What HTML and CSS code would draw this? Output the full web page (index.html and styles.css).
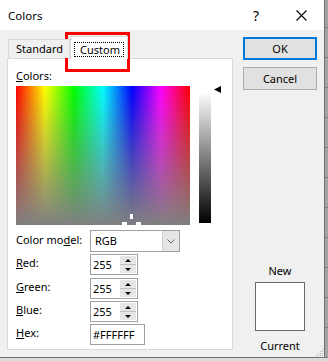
FILE: index.html
```html
<!DOCTYPE html>
<html lang="en">
<head>
<meta charset="UTF-8">
<title>Colors</title>
<link rel="stylesheet" href="styles.css">
</head>
<body>
<div class="screen">
  <div class="window">
    <div class="titlebar">
      <span class="title">Colors</span>
      <span class="help">?</span>
      <span class="close">
        <svg width="11" height="11" viewBox="0 0 11 11"><path d="M0.5 0.5L10.5 10.5M10.5 0.5L0.5 10.5" stroke="#000" stroke-width="1.1" fill="none"/></svg>
      </span>
    </div>
    <div class="main">
      <div class="tabs">
        <div class="tab-row">
          <div class="tab">Standard</div>
          <div class="tab active"><span class="focus">Custom</span></div>
        </div>
        <div class="panel">
          <div class="lbl"><u>C</u>olors:</div>
          <div class="picker">
            <div class="spectrum">
              <span class="cross v"></span>
              <span class="cross l"></span>
              <span class="cross r"></span>
            </div>
            <div class="lum"></div>
            <svg class="arrow" width="7" height="7" viewBox="0 0 7 7"><path d="M0 3.5L7 0V7Z" fill="#000"/></svg>
          </div>
          <div class="row first">
            <label>Color mo<u>d</u>el:</label>
            <div class="combo">
              <span>RGB</span>
              <div class="drop">
                <svg width="8" height="5" viewBox="0 0 8 5"><path d="M0.5 0.5L4 4L7.5 0.5" stroke="#606060" fill="none"/></svg>
              </div>
            </div>
          </div>
          <div class="row">
            <label><u>R</u>ed:</label>
            <div class="spin-box"><span class="val">255</span><div class="spin"><i><b class="up"></b></i><i><b class="down"></b></i></div></div>
          </div>
          <div class="row gap3">
            <label><u>G</u>reen:</label>
            <div class="spin-box"><span class="val">255</span><div class="spin"><i><b class="up"></b></i><i><b class="down"></b></i></div></div>
          </div>
          <div class="row">
            <label><u>B</u>lue:</label>
            <div class="spin-box"><span class="val">255</span><div class="spin"><i><b class="up"></b></i><i><b class="down"></b></i></div></div>
          </div>
          <div class="row">
            <label><u>H</u>ex:</label>
            <div class="hex">#FFFFFF</div>
          </div>
        </div>
      </div>
      <div class="side">
        <button class="btn ok">OK</button>
        <button class="btn cancel">Cancel</button>
        <div class="new">New</div>
        <div class="swatch"></div>
        <div class="current">Current</div>
      </div>
    </div>
    <svg class="grip" width="10" height="10" viewBox="0 0 10 10">
      <rect x="8" y="2" width="1" height="1" fill="#b0b0b0"/>
      <rect x="6" y="4" width="1" height="1" fill="#b0b0b0"/>
      <rect x="8" y="4" width="1" height="1" fill="#b0b0b0"/>
      <rect x="4" y="6" width="1" height="1" fill="#b0b0b0"/>
      <rect x="6" y="6" width="1" height="1" fill="#b0b0b0"/>
      <rect x="8" y="6" width="1" height="1" fill="#b0b0b0"/>
      <rect x="2" y="8" width="1" height="1" fill="#b0b0b0"/>
      <rect x="4" y="8" width="1" height="1" fill="#b0b0b0"/>
      <rect x="6" y="8" width="1" height="1" fill="#b0b0b0"/>
      <rect x="8" y="8" width="1" height="1" fill="#b0b0b0"/>
    </svg>
  </div>
  <div class="strip"></div>
  <div class="mark"></div>
</div>
</body>
</html>
```

FILE: styles.css
```css
* {
margin: 0;
padding: 0;
box-sizing: border-box;
}
body {
background: #dadada;
font-family: "Noto Sans", sans-serif;
font-size: 11px;
color: #000;
}
.screen {
display: flex;
position: relative;
}
.window {
position: relative;
width: 325px;
height: 358px;
background: #f0f0f0;
border-right: 1px solid #707070;
border-bottom: 1px solid #707070;
}
.strip {
width: 3px;
height: 358px;
background: repeating-linear-gradient(to bottom, #a3a3a3 0 27px, #7d7d7d 27px 28px, #a3a3a3 28px 30px);
}
.mark {
position: absolute;
left: 65px;
top: 32px;
width: 65px;
height: 40px;
border: 3px solid #f00;
}
.titlebar {
height: 30px;
background: #fff;
display: flex;
align-items: center;
padding: 0 13px 0 8px;
}
.title {
flex: 1;
font-size: 11.5px;
}
.help {
width: 14px;
margin-right: 28px;
text-align: center;
font-size: 14px;
}
.close {
width: 20px;
display: flex;
justify-content: center;
}
.main {
display: flex;
height: 327px;
padding: 6px 0 0 7px;
}
.tabs {
width: 226px;
display: flex;
flex-direction: column;
}
.tab-row {
position: relative;
z-index: 1;
display: flex;
align-items: flex-end;
height: 23px;
margin-bottom: -1px;
}
.tab {
width: 62px;
height: 19px;
margin: 0 0 1px 1px;
padding-left: 7px;
line-height: 18px;
background: #f0f0f0;
border: 1px solid #d9d9d9;
border-bottom: none;
}
.tab.active {
width: 58px;
height: 23px;
margin: 0;
padding: 0;
background: #fff;
}
.focus {
display: block;
width: 50px;
height: 15px;
margin: 5px 0 0 3px;
padding-left: 2px;
line-height: 13px;
text-align: center;
border: 1px dotted #000;
}
.panel {
height: 292px;
background: #fff;
border: 1px solid #d9d9d9;
padding: 9px 0 0 8px;
}
.lbl {
height: 15px;
line-height: 15px;
}
.picker {
display: flex;
align-items: flex-start;
height: 139px;
margin-top: 3px;
}
.spectrum {
position: relative;
width: 174px;
height: 139px;
background: linear-gradient(to bottom, rgba(128,128,128,0), #808080), linear-gradient(to right, #f00, #ff0, #0f0, #0ff, #00f, #f0f, #f00);
}
.cross {
position: absolute;
background: #fff;
}
.cross.v {
left: 114px;
top: 128px;
width: 3px;
height: 5px;
}
.cross.l {
left: 106px;
top: 136px;
width: 5px;
height: 3px;
}
.cross.r {
left: 120px;
top: 136px;
width: 5px;
height: 3px;
}
.lum {
width: 12px;
height: 131px;
margin: 6px 0 0 9px;
background: linear-gradient(#fff, #000);
}
.arrow {
margin-left: 3px;
}
.row {
display: flex;
align-items: center;
margin-top: 2px;
}
.row.first {
margin-top: 5px;
}
.row.gap3 {
margin-top: 3px;
}
.row label {
width: 74px;
margin-bottom: 4px;
line-height: 15px;
}
.combo {
display: flex;
width: 90px;
height: 22px;
background: #fff;
border: 1px solid #a0a0a0;
}
.combo span {
flex: 1;
padding-left: 4px;
line-height: 20px;
}
.drop {
width: 17px;
display: flex;
align-items: center;
justify-content: center;
background: #e5e5e5;
border-left: 1px solid #cfcfcf;
}
.spin-box {
display: flex;
width: 48px;
height: 21px;
background: #fff;
border: 1px solid #a0a0a0;
}
.val {
flex: 1;
padding-left: 2px;
line-height: 19px;
}
.spin {
width: 16px;
margin: 1px;
display: flex;
flex-direction: column;
}
.spin i {
flex: 1;
display: flex;
align-items: center;
justify-content: center;
background: #e5e5e5;
}
.spin i + i {
border-top: 1px solid #bdbdbd;
}
.up {
border-left: 3px solid transparent;
border-right: 3px solid transparent;
border-bottom: 3px solid #000;
}
.down {
border-left: 3px solid transparent;
border-right: 3px solid transparent;
border-top: 3px solid #000;
}
.hex {
width: 55px;
height: 21px;
padding-left: 2px;
line-height: 19px;
background: #fff;
border: 1px solid #a0a0a0;
}
.side {
width: 74px;
margin-left: 10px;
display: flex;
flex-direction: column;
align-items: center;
padding-bottom: 4px;
}
.btn {
width: 74px;
height: 23px;
font: inherit;
line-height: 21px;
color: #000;
text-align: center;
background: #e1e1e1;
border: 1px solid #adadad;
}
.btn.ok {
margin-top: 1px;
line-height: 19px;
border: 2px solid #0078d7;
}
.btn.cancel {
margin-top: 7px;
}
.new {
margin-top: auto;
line-height: 15px;
}
.swatch {
width: 50px;
height: 49px;
margin-top: 4px;
background: #fff;
border: 1px solid #696969;
}
.current {
margin-top: 7px;
line-height: 15px;
}
.grip {
position: absolute;
right: 0;
bottom: 0;
}
```
